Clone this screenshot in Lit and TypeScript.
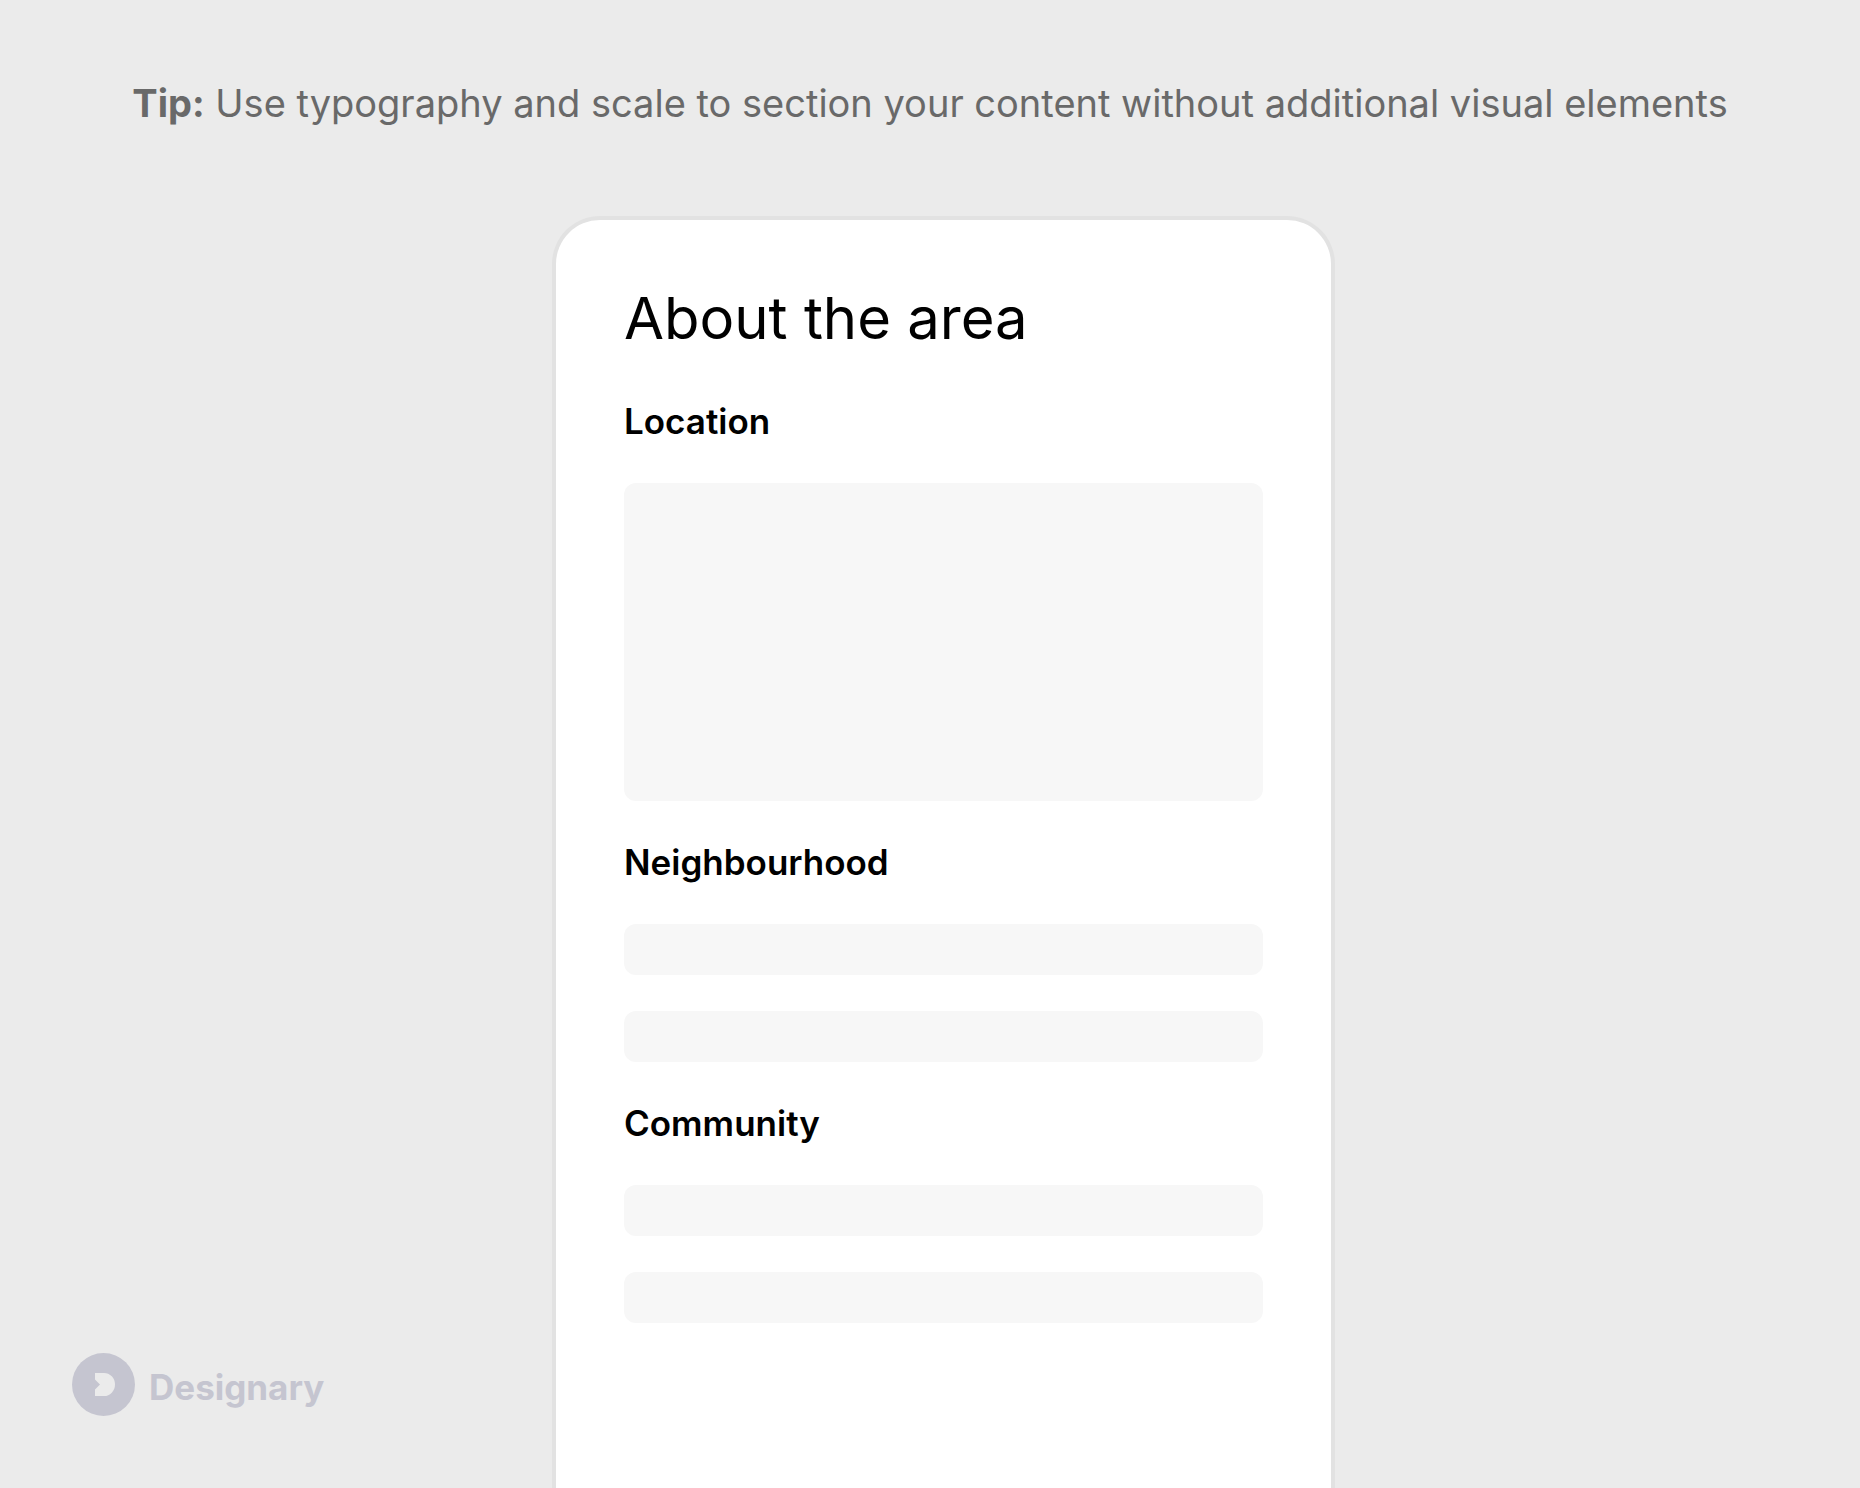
import { LitElement, html, css } from "lit";
import { customElement } from "lit/decorators.js";

interface Section {
  title: string;
  blocks: ("tall" | "line")[];
}

const sections: Section[] = [
  { title: "Location", blocks: ["tall"] },
  { title: "Neighbourhood", blocks: ["line", "line"] },
  { title: "Community", blocks: ["line", "line"] },
];

@customElement("app-root")
export class AppRoot extends LitElement {
  static styles = css`
    :host {
      display: block;
      font-family: Inter, "Liberation Sans", sans-serif;
      color: #000;
    }
    .page {
      box-sizing: border-box;
      min-height: 100vh;
      display: grid;
      grid-template-rows: auto 1fr;
      background: #ebebeb;
    }
    .tip {
      margin: 0;
      padding: 75px 24px 85px;
      font-size: 38px;
      line-height: 56px;
      text-align: center;
      color: #696969;
    }
    .stage {
      display: grid;
      grid-template-columns: minmax(0, 552fr) minmax(0, 783fr) minmax(0, 525fr);
    }
    .brand {
      align-self: end;
      display: flex;
      align-items: center;
      gap: 14px;
      padding: 0 0 72px 72px;
      color: #c5c5d0;
    }
    .mark {
      flex: none;
      width: 63px;
      height: 63px;
    }
    .name {
      padding-top: 4px;
      font-weight: 700;
      font-size: 35px;
      line-height: 44px;
    }
    .card {
      display: flex;
      flex-direction: column;
      gap: 36px;
      padding: 68px;
      background: #fff;
      border: 4px solid #e2e2e2;
      border-bottom: 0;
      border-radius: 48px 48px 0 0;
    }
    .title {
      margin: 0 0 12px;
      font-size: 58px;
      line-height: 60px;
      font-weight: 400;
    }
    .section {
      display: flex;
      flex-direction: column;
      gap: 36px;
    }
    .heading {
      margin: 0;
      font-size: 35px;
      line-height: 51px;
      font-weight: 600;
    }
    .block {
      border-radius: 12px;
      background: #f7f7f7;
    }
    .line {
      height: 51px;
    }
    .tall {
      height: 318px;
    }
  `;

  render() {
    return html`
      <div class="page">
        <p class="tip">
          <strong>Tip:</strong> Use typography and scale to section your content without additional
          visual elements
        </p>
        <div class="stage">
          <footer class="brand">
            <svg class="mark" viewBox="0 0 126 126" aria-hidden="true">
              <circle cx="63" cy="63" r="63" fill="currentColor" />
              <path d="M46 40H64A22 23 0 0 1 64 86H46V73L56 63L46 53Z" fill="#ebebeb" />
            </svg>
            <span class="name">Designary</span>
          </footer>
          <main class="card">
            <h1 class="title">About the area</h1>
            ${sections.map(
              (s) => html`
                <section class="section">
                  <h2 class="heading">${s.title}</h2>
                  ${s.blocks.map((kind) => html`<div class="block ${kind}"></div>`)}
                </section>
              `,
            )}
          </main>
        </div>
      </div>
    `;
  }
}
